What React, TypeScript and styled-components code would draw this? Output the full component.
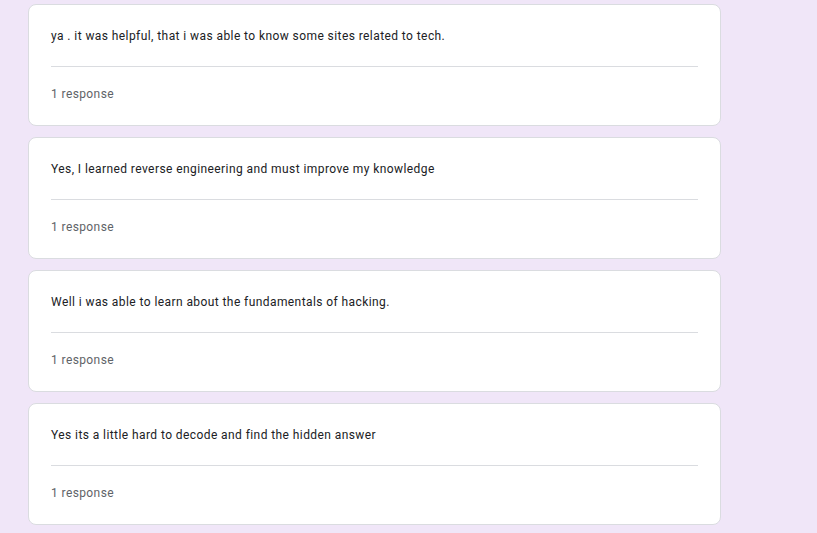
import React from "react";
import styled, { createGlobalStyle } from "styled-components";

const Global = createGlobalStyle`
  html, body { margin: 0; padding: 0; background: #f0e6f8; }
  body { font-family: Roboto, "Noto Sans", Arial, sans-serif; }
`;

const Page = styled.div`
  display: flex;
  flex-direction: column;
  gap: 11px;
  padding: 4px 0 0 28px;
  width: 693px;
`;

const Card = styled.div`
  background: #fff;
  border: 1px solid #dadce0;
  border-radius: 8px;
  padding: 23px 22px 22px;
  height: 122px;
  box-sizing: border-box;
  display: flex;
  flex-direction: column;
`;

const Answer = styled.div`
  font-size: 12px;
  line-height: 16px;
  color: #202124;
  letter-spacing: 0.42px;
`;

const Divider = styled.div`
  height: 1px;
  background: #dadce0;
  margin: 22px 0 19px;
`;

const Count = styled.div`
  font-size: 12px;
  line-height: 16px;
  color: #5f6368;
  letter-spacing: 0.4px;
`;

const answers = [
  "ya . it was helpful, that i was able to know some sites related to tech.",
  "Yes, I learned reverse engineering and must improve my knowledge",
  "Well i was able to learn about the fundamentals of hacking.",
  "Yes its a little hard to decode and find the hidden answer",
];

export default function App() {
  return (
    <>
      <Global />
      <Page>
        {answers.map((a) => (
          <Card key={a}>
            <Answer>{a}</Answer>
            <Divider />
            <Count>1 response</Count>
          </Card>
        ))}
      </Page>
    </>
  );
}
